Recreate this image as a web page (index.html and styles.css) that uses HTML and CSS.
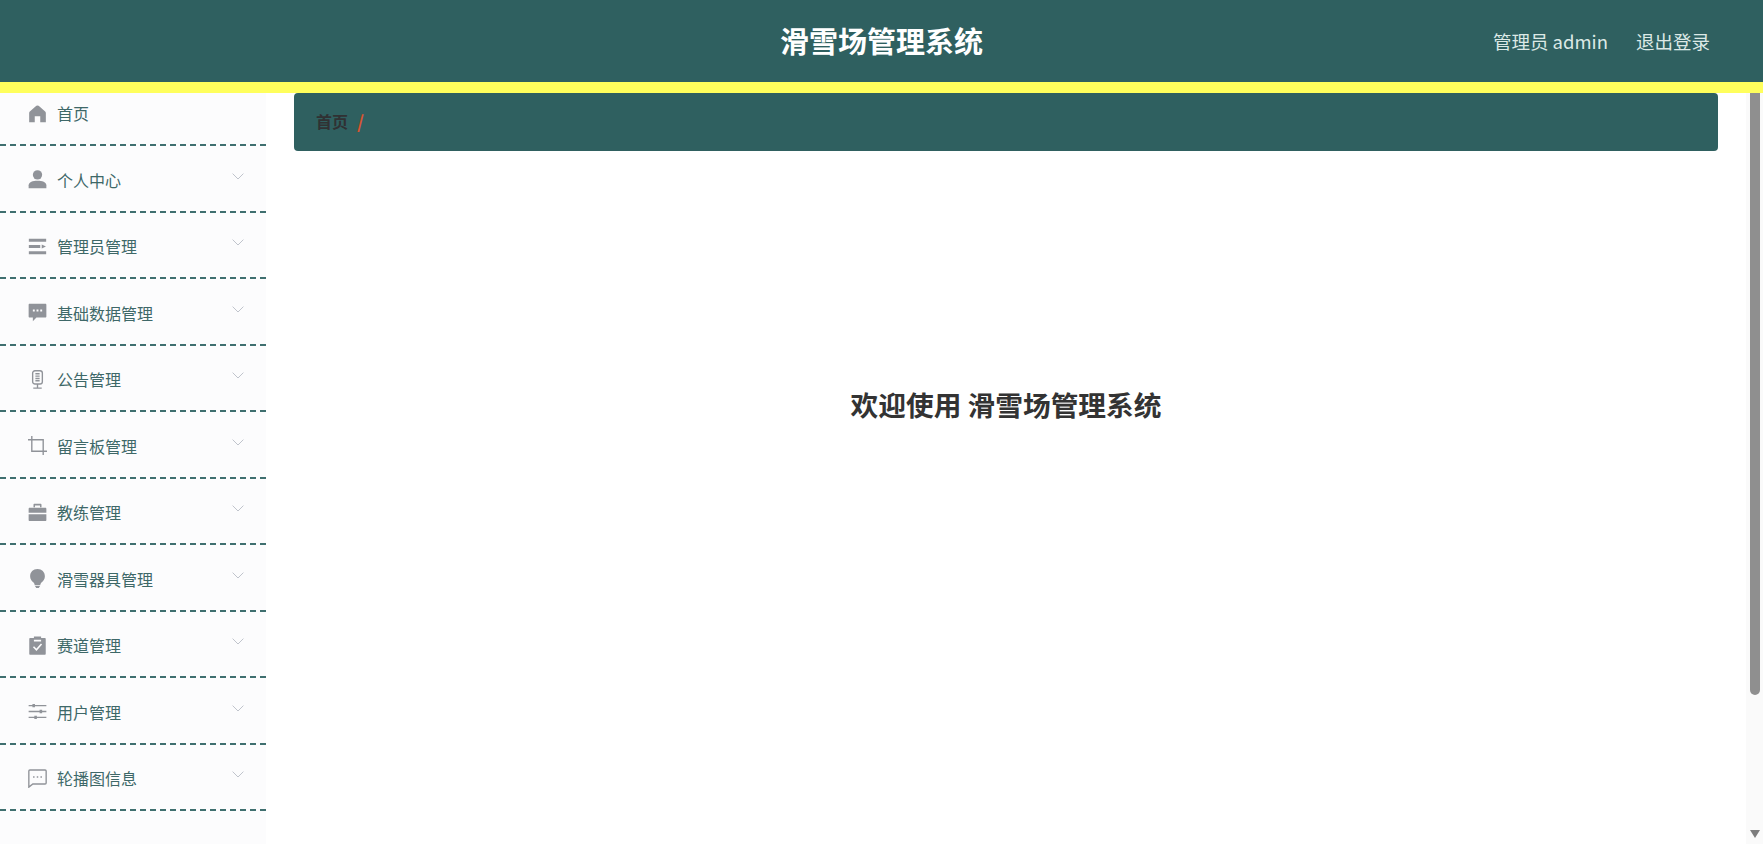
FILE: index.html
```html
<!DOCTYPE html>
<html lang="zh-CN">
<head>
<meta charset="utf-8">
<title>滑雪场管理系统</title>
<link rel="stylesheet" href="styles.css">
</head>
<body>
<header class="topbar">
  <div class="topbar-title">滑雪场管理系统</div>
  <div class="topbar-user">
    <span>管理员 admin</span>
    <span>退出登录</span>
  </div>
</header>
<div class="layout">
  <nav class="sidebar">
    <ul class="menu">
      <li class="menu-item">
        <svg class="icon" viewBox="0 0 18 18"><path class="solid" d="M9 1.4C8.2 1.4 7.7 1.8 7.1 2.3L2 6.8C1.4 7.3 1.1 7.9 1.1 8.6V17.2H6.4V11.6H11.6V17.2H16.9V8.6C16.9 7.9 16.6 7.3 16 6.8L10.9 2.3C10.3 1.8 9.8 1.4 9 1.4Z"/></svg>
        <span class="menu-label">首页</span>
      </li>
      <li class="menu-item">
        <svg class="icon" viewBox="0 0 18 18"><circle class="solid" cx="9" cy="4.6" r="4.4"/><path class="solid" d="M.6 17.2V14.4C.6 11.6 4.6 10.2 9 10.2S17.4 11.6 17.4 14.4V17.2Z"/></svg>
        <span class="menu-label">个人中心</span>
        <svg class="chevron" viewBox="0 0 12 7"><path d="M.6.6 6 6 11.4.6"/></svg>
      </li>
      <li class="menu-item">
        <svg class="icon" viewBox="0 0 18 18"><path class="solid" d="M.8 1.6H17.2V4.4H.8ZM.8 7.6H11.6V10.4H.8ZM13 7 17 9 13 11ZM.8 13.6H17.2V16.4H.8Z"/></svg>
        <span class="menu-label">管理员管理</span>
        <svg class="chevron" viewBox="0 0 12 7"><path d="M.6.6 6 6 11.4.6"/></svg>
      </li>
      <li class="menu-item">
        <svg class="icon" viewBox="0 0 18 18"><path class="solid" d="M1.6 .8H16.4C17 .8 17.4 1.2 17.4 1.8V12.8C17.4 13.4 17 13.8 16.4 13.8H8L4.6 17.4V13.8H1.6C1 13.8 .6 13.4 .6 12.8V1.8C.6 1.2 1 .8 1.6 .8Z"/><path class="cut" d="M4.6 6.2H6.4V8H4.6ZM8.1 6.2H9.9V8H8.1ZM11.6 6.2H13.4V8H11.6Z"/></svg>
        <span class="menu-label">基础数据管理</span>
        <svg class="chevron" viewBox="0 0 12 7"><path d="M.6.6 6 6 11.4.6"/></svg>
      </li>
      <li class="menu-item">
        <svg class="icon" viewBox="0 0 18 18"><rect class="line" x="4.4" y=".7" width="9.2" height="12.6" rx="2.2"/><path class="line" d="M9 13.3V16.8M5 17.2H13M7 3.6H11M7 5.8H11M7 8H11M7 10.2H11"/></svg>
        <span class="menu-label">公告管理</span>
        <svg class="chevron" viewBox="0 0 12 7"><path d="M.6.6 6 6 11.4.6"/></svg>
      </li>
      <li class="menu-item">
        <svg class="icon" viewBox="0 0 18 18"><path class="line" d="M3.6 0V14.4H18M0 3.6H14.4V18"/></svg>
        <span class="menu-label">留言板管理</span>
        <svg class="chevron" viewBox="0 0 12 7"><path d="M.6.6 6 6 11.4.6"/></svg>
      </li>
      <li class="menu-item">
        <svg class="icon" viewBox="0 0 18 18"><path class="solid" d="M6.2 .8H11.8C12.4 .8 12.8 1.2 12.8 1.8V4H11.4V2.4H6.6V4H5.2V1.8C5.2 1.2 5.6 .8 6.2 .8ZM1.6 4.4H16.4C17 4.4 17.4 4.8 17.4 5.4V9.2H.6V5.4C.6 4.8 1 4.4 1.6 4.4ZM.6 10.6H17.4V16C17.4 16.6 17 17 16.4 17H1.6C1 17 .6 16.6 .6 16Z"/></svg>
        <span class="menu-label">教练管理</span>
        <svg class="chevron" viewBox="0 0 12 7"><path d="M.6.6 6 6 11.4.6"/></svg>
      </li>
      <li class="menu-item">
        <svg class="icon" viewBox="0 0 18 18"><path class="solid" d="M9 0C13.2 0 16 3 16 6.8 16 9.6 14.6 11.2 13 12.6 12 13.6 11.8 14.6 11.6 15.4H6.4C6.2 14.6 6 13.6 5 12.6 3.4 11.2 2 9.6 2 6.8 2 3 4.8 0 9 0ZM6.6 16.2H11.4L10.2 18H7.8Z"/></svg>
        <span class="menu-label">滑雪器具管理</span>
        <svg class="chevron" viewBox="0 0 12 7"><path d="M.6.6 6 6 11.4.6"/></svg>
      </li>
      <li class="menu-item">
        <svg class="icon" viewBox="0 0 18 18"><path class="solid" d="M5.6.4H12.4V2H15.8C16.4 2 16.8 2.4 16.8 3V16.8C16.8 17.4 16.4 17.8 15.8 17.8H2.2C1.6 17.8 1.2 17.4 1.2 16.8V3C1.2 2.4 1.6 2 2.2 2H5.6Z"/><path class="check" d="M5.2 10.2 8 13 12.8 7.6M5.6 4.4H12.4"/></svg>
        <span class="menu-label">赛道管理</span>
        <svg class="chevron" viewBox="0 0 12 7"><path d="M.6.6 6 6 11.4.6"/></svg>
      </li>
      <li class="menu-item">
        <svg class="icon" viewBox="0 0 18 18"><path class="line" d="M.6 3.4H17.4M.6 9H17.4M.6 14.6H17.4"/><path class="solid" d="M4.2 1.8H6.6V5H4.2ZM11 7.4H13.4V10.6H11ZM6 13H8.4V16.2H6Z"/></svg>
        <span class="menu-label">用户管理</span>
        <svg class="chevron" viewBox="0 0 12 7"><path d="M.6.6 6 6 11.4.6"/></svg>
      </li>
      <li class="menu-item">
        <svg class="icon" viewBox="0 0 18 18"><path class="line" d="M1.8 1H16.2C16.8 1 17.2 1.4 17.2 2V13.2C17.2 13.8 16.8 14.2 16.2 14.2H4.6L.8 17.2V2C.8 1.4 1.2 1 1.8 1Z"/><path class="solid" d="M4.8 6.8H6.2V8.2H4.8ZM8.3 6.8H9.7V8.2H8.3ZM11.8 6.8H13.2V8.2H11.8Z"/></svg>
        <span class="menu-label">轮播图信息</span>
        <svg class="chevron" viewBox="0 0 12 7"><path d="M.6.6 6 6 11.4.6"/></svg>
      </li>
    </ul>
  </nav>
  <main class="main">
    <div class="breadcrumb">
      <span class="crumb">首页</span>
      <span class="crumb-sep">/</span>
    </div>
    <h1 class="welcome">欢迎使用 滑雪场管理系统</h1>
  </main>
  <div class="scrollbar">
    <div class="scroll-thumb"></div>
    <div class="scroll-arrow"></div>
  </div>
</div>
</body>
</html>
```

FILE: styles.css
```css
* {
  box-sizing: border-box;
}

html,
body {
  margin: 0;
  height: 100%;
  overflow: hidden;
}

body {
  display: flex;
  flex-direction: column;
  background: #fff;
  font-family: "Noto Sans CJK SC", "Noto Sans", sans-serif;
}

.topbar {
  position: relative;
  z-index: 2;
  flex: none;
  height: 92.5px;
  display: flex;
  align-items: center;
  justify-content: center;
  background: #2f6060;
  border-bottom: 11px solid #ffff5c;
}

.topbar-title {
  color: #fff;
  font-size: 29px;
  font-weight: 700;
  line-height: 1;
}

.topbar-user {
  position: absolute;
  right: 53px;
  top: 0;
  height: 81px;
  display: flex;
  align-items: center;
  gap: 28px;
  color: #dce9e6;
  font-size: 18.5px;
}

.layout {
  flex: 1;
  min-height: 0;
  display: flex;
}

.sidebar {
  flex: none;
  width: 266px;
  background: #fcfcfd;
}

.menu {
  list-style: none;
  margin: -13px 0 0;
  padding: 0;
}

.menu-item {
  height: 66.5px;
  display: flex;
  align-items: center;
  padding: 3px 22px 0 28px;
  border-bottom: 2px dashed #3f6f6f;
}

.icon {
  flex: none;
  width: 19px;
  height: 19px;
  margin-right: 10px;
}

.solid {
  fill: #909399;
}

.line {
  fill: none;
  stroke: #909399;
  stroke-width: 1.3;
}

.cut {
  fill: #fcfcfd;
}

.check {
  fill: none;
  stroke: #fcfcfd;
  stroke-width: 1.5;
}

.menu-label {
  flex: 1;
  color: #3e6868;
  font-size: 16px;
  line-height: 24px;
}

.chevron {
  flex: none;
  width: 12px;
  height: 7px;
  margin-bottom: 7px;
  fill: none;
  stroke: #c0c4cc;
  stroke-width: 1;
}

.main {
  flex: 1;
  min-width: 0;
  padding: 0 28px;
}

.breadcrumb {
  height: 58px;
  display: flex;
  align-items: center;
  gap: 9px;
  padding: 0 0 2px 22px;
  background: #2f6060;
  border-radius: 4px;
  font-size: 16px;
}

.crumb {
  color: #303133;
  font-weight: 700;
}

.crumb-sep {
  color: #d9542f;
  font-size: 18px;
  font-weight: 700;
}

.welcome {
  margin: 235px 0 0;
  color: #333;
  font-size: 27.7px;
  font-weight: 700;
  line-height: 36px;
  text-align: center;
}

.scrollbar {
  flex: none;
  width: 17px;
  display: flex;
  flex-direction: column;
  align-items: center;
  background: #fafafa;
}

.scroll-thumb {
  width: 10px;
  height: 602px;
  margin-left: 1px;
  background: #8f8f8f;
  border-radius: 0 0 5px 5px;
}

.scroll-arrow {
  width: 0;
  height: 0;
  margin-top: auto;
  margin-bottom: 6px;
  margin-left: 1px;
  border-style: solid;
  border-width: 8px 5.5px 0;
  border-color: #7d7d7d transparent transparent;
}
```
